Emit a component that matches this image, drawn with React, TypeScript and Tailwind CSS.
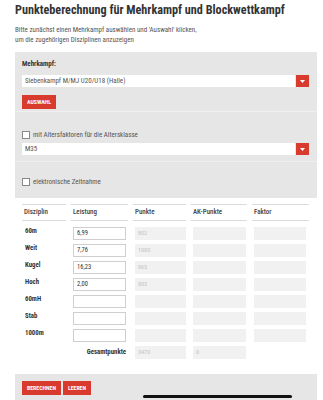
import React from "react";

const F = "font-['Roboto','Liberation_Sans',sans-serif] [font-stretch:75%]";

function Caret() {
  return (
    <div className="w-[13px] h-[12px] bg-[#d93a2e] flex items-center justify-center">
      <svg width="5" height="3" viewBox="0 0 5 3">
        <path d="M0 0 L5 0 L2.5 3 Z" fill="#fff" />
      </svg>
    </div>
  );
}

function Select({ value }: { value: string }) {
  return (
    <div className="flex items-center w-[287px] h-[12px]">
      <div className="flex-1 h-full bg-white flex items-center pl-[3px] text-[7px] text-[#555]">{value}</div>
      <div className="ml-[1px]"><Caret /></div>
    </div>
  );
}

function Check({ label }: { label: string }) {
  return (
    <div className="flex items-center gap-[3px]">
      <div className="w-[8px] h-[8px] bg-white border border-[#888]" />
      <span className="text-[7px] text-[#555] leading-[8px]">{label}</span>
    </div>
  );
}

function Btn({ label, w }: { label: string; w: string }) {
  return (
    <div className={`${w} h-[14px] bg-[#d93a2e] text-white font-bold text-[5.8px] flex items-center justify-center`}>
      {label}
    </div>
  );
}

const rows: [string, string, string][] = [
  ["60m", "6,99", "802"],
  ["Weit", "7,76", "1000"],
  ["Kugel", "16,23", "865"],
  ["Hoch", "2,00", "803"],
  ["60mH", "", ""],
  ["Stab", "", ""],
  ["1000m", "", ""],
];

function Out({ v }: { v?: string }) {
  return (
    <div className="h-[13px] bg-[#f1f1f1] text-[6.2px] text-[#c3c3c3] flex items-center pl-[3px]">{v}</div>
  );
}

export default function App() {
  return (
    <div className={`${F} relative w-[323px] h-[400px] overflow-hidden bg-white text-[#333]`}>
      <div className="pl-[15px] w-[317px]">
        <h1 className="pt-[3px] text-[12.2px] leading-[15px] font-bold text-[#333] whitespace-nowrap">
          Punkteberechnung für Mehrkampf und Blockwettkampf
        </h1>
        <p className="mt-[7px] text-[7px] leading-[10px] text-[#555]">
          Bitte zunächst einen Mehrkampf auswählen und 'Auswahl' klicken,
          <br />
          um die zugehörigen Disziplinen anzuzeigen
        </p>
        <div className="mt-[7px] bg-[#e6e6e6]">
          <div className="h-[59px] pl-[7px] pt-[8px]">
            <div className="text-[7px] font-bold leading-[8px] text-[#333]">Mehrkampf:</div>
            <div className="mt-[7px]"><Select value="Siebenkampf M/MJ U20/U18 (Halle)" /></div>
            <div className="mt-[8px]"><Btn label="AUSWAHL" w="w-[34px]" /></div>
          </div>
          <div className="h-[50px] border-t border-[#efefef] pl-[7px] pt-[19px]">
            <Check label="mit Altersfaktoren für die Altersklasse" />
            <div className="mt-[4px]"><Select value="M35" /></div>
          </div>
          <div className="h-[37px] border-t border-[#efefef] pl-[7px] pt-[16px]">
            <Check label="elektronische Zeitnahme" />
          </div>
        </div>
        <div className="pl-[7px] mt-[6px]">
          <div className="grid grid-cols-[44px_57px_53px_56px_57px] gap-x-[5px]">
            {["Disziplin", "Leistung", "Punkte", "AK-Punkte", "Faktor"].map((h) => (
              <div key={h} className="h-[17px] border-t border-b border-[#dcdcdc] flex items-center pl-[2px] text-[7px] font-medium text-[#444]">
                {h}
              </div>
            ))}
          </div>
          <div className="mt-[6px] flex flex-col gap-[4px]">
            {rows.map(([d, l, p]) => (
              <div key={d} className="grid grid-cols-[44px_57px_53px_56px_57px] gap-x-[5px] h-[13px]">
                <div className="pl-[3px] text-[6.8px] font-bold text-[#333] leading-[9px]">{d}</div>
                <div className="px-[2px]">
                  <div className="h-[13px] bg-white border border-[#cfcfcf] text-[6.5px] text-[#333] flex items-center pl-[3px]">{l}</div>
                </div>
                <div className="pl-[2px]"><Out v={p} /></div>
                <div className="pl-[2px] pr-[1px]"><Out /></div>
                <div className="pl-[2px] pr-[3px]"><Out /></div>
              </div>
            ))}
            <div className="grid grid-cols-[44px_57px_53px_56px_57px] gap-x-[5px] h-[13px]">
              <div />
              <div className="pr-[2px] text-right text-[6.8px] font-bold text-[#333] leading-[12px]">Gesamtpunkte</div>
              <div className="pl-[2px]"><Out v="3470" /></div>
              <div className="pl-[2px] pr-[1px]"><Out v="0" /></div>
              <div />
            </div>
          </div>
        </div>
        <div className="mt-[15px] bg-[#e6e6e6] h-[30px] pl-[7px] pt-[7px] flex gap-[2px]">
          <Btn label="BERECHNEN" w="w-[39px]" />
          <Btn label="LEEREN" w="w-[28px]" />
        </div>
      </div>
      <div className="absolute left-[143px] top-[395px] w-[149px] h-[3px] rounded-full bg-[#111]" />
    </div>
  );
}
